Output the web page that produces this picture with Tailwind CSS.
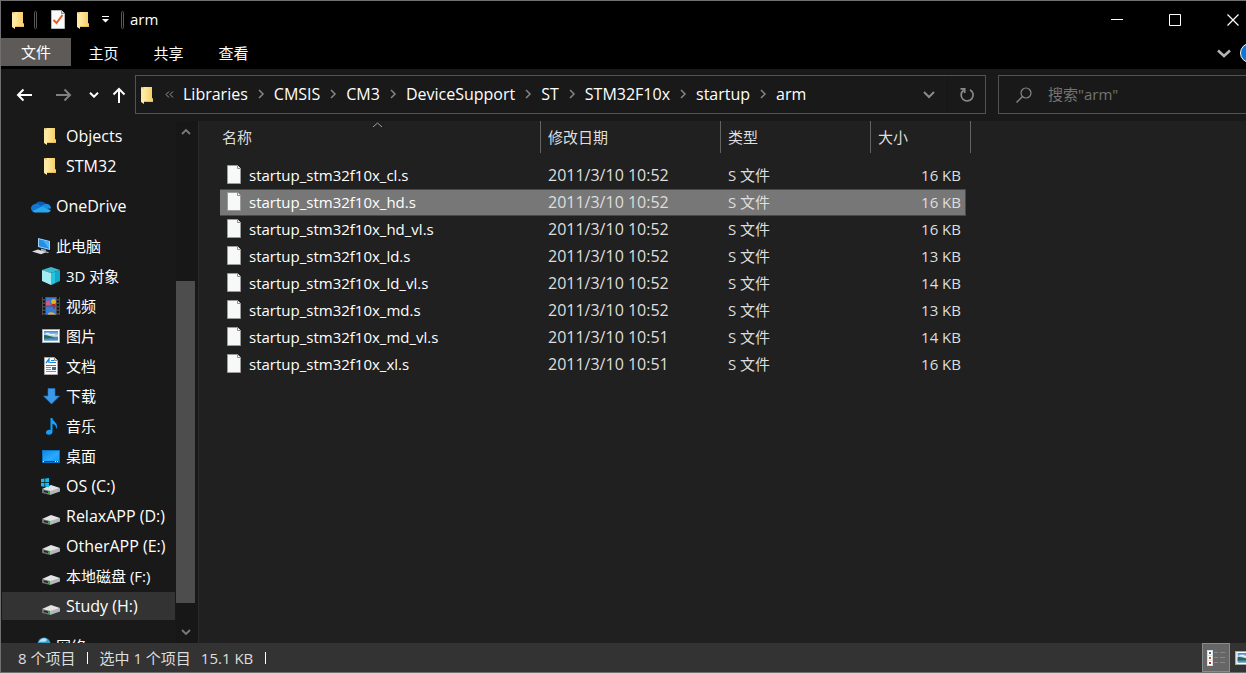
<!DOCTYPE html>
<html lang="zh-CN">
<head>
<meta charset="utf-8">
<title>arm</title>
<script src="https://cdn.jsdelivr.net/npm/@tailwindcss/browser@4"></script>
</head>
<body class="h-screen overflow-hidden bg-[#202020] font-['Open_Sans','Noto_Sans_CJK_SC',sans-serif] text-[15px] leading-5 text-white">
<svg class="absolute h-0 w-0" aria-hidden="true">
  <defs>
    <linearGradient id="gf" x1="0" x2="1"><stop offset="0" stop-color="#ffeaa0"/><stop offset="1" stop-color="#f5cd62"/></linearGradient>
    <linearGradient id="gs" x1="0" y1="0" x2="1" y2="1"><stop offset="0" stop-color="#1388e0"/><stop offset=".6" stop-color="#2aa9ff"/><stop offset="1" stop-color="#0e9bfb"/></linearGradient>
    <linearGradient id="gp" x1="0" y1="0" x2="0" y2="1"><stop offset="0" stop-color="#3d86d8"/><stop offset=".5" stop-color="#cfe6f5"/><stop offset=".65" stop-color="#4f8fa8"/><stop offset=".8" stop-color="#3a7fb0"/><stop offset="1" stop-color="#9dc6e0"/></linearGradient>
    <symbol id="folder" viewBox="0 0 14 18"><path d="M3 1h9v11l1 1v3H3z" fill="#e9bf5c"/><path d="M4 1h8v11l1 1v2H4z" fill="url(#gf)"/><path d="M1 1l3 2v15l-3-2z" fill="#ffe9a6"/><path d="M1 1h3v2z" fill="#f3cf74"/></symbol>
    <symbol id="file" viewBox="0 0 16 19"><path d="M1.5.5h10l3 3v15h-13z" fill="#f7f8f8" stroke="#9b9b9b"/><path d="M11.500.5v3h3" fill="#fff" stroke="#8d8d8d"/></symbol>
    <symbol id="drive" viewBox="0 0 20 14"><path d="M1 7l9-4 9 3-9 5z" fill="#e4e4e6"/><path d="M1 7l8 2v4l-8-2z" fill="#6d7276"/><path d="M9 9l10-3v3.500L9 13z" fill="#b4b7ba"/><path d="M3 8.600l4 1v1.500l-4-1z" fill="#222"/><path d="M7 10h1.500v1.500H7z" fill="#2fc02f"/></symbol>
    <symbol id="right" viewBox="0 0 8 10"><path d="M2 1l4 4-4 4" fill="none" stroke="#858585" stroke-width="1.500"/></symbol>
    <symbol id="down" viewBox="0 0 12 8"><path d="M1 1l5 5 5-5" fill="none" stroke="currentColor" stroke-width="2"/></symbol>
    <symbol id="picture" viewBox="0 0 18 14"><path d="M0 0h18v14H0z" fill="#a8a8a8"/><path d="M1 1h16v12H1z" fill="#fff"/><path d="M2 2h14v10H2z" fill="url(#gp)"/><path d="M2 6c4 0 7 1.500 11 2.500L2 9.500z" fill="#2d6658"/><path d="M3 5c2-2 4-1 5 0h5v1H8z" fill="#e6f3fb"/></symbol>
  </defs>
</svg>
<div class="flex h-full flex-col border-y border-l border-[#6f6f6f]">

  <header class="shrink-0 bg-black">
    <div class="flex h-[37px] items-center justify-between">
      <div class="flex items-center">
        <svg class="ml-[10px] h-[18px] w-[14px]"><use href="#folder"/></svg>
        <span class="ml-[9px] h-[18px] w-[3px] rounded-sm border border-[#5a5a5a]"></span>
        <button aria-label="属性" class="ml-[13px]"><svg class="block h-[19px] w-4" viewBox="0 0 16 19"><path d="M1.500.5h10l3 3v15h-13z" fill="#fafafa" stroke="#b8b8b8"/><path d="M11.500.5v3h3" fill="#ddd" stroke="#8d8d8d"/><path d="M3.500 10l3 3 6-8" fill="none" stroke="#ea5b1c" stroke-width="2"/></svg></button>
        <button aria-label="新建文件夹" class="ml-[10px]"><svg class="block h-[18px] w-[14px]"><use href="#folder"/></svg></button>
        <button aria-label="自定义快速访问工具栏" class="ml-3"><svg class="block h-[7px] w-[7px]" viewBox="0 0 7 7"><path d="M0 0h7v1H0zM0 3h7L3.500 6.500z" fill="#fff"/></svg></button>
        <span class="ml-3 h-[18px] w-[3px] rounded-sm border border-[#5a5a5a]"></span>
        <h1 class="ml-[6px] pb-[2px]">arm</h1>
      </div>
      <div class="-mr-[16px] flex">
        <button aria-label="最小化" class="grid h-[37px] w-[58px] place-items-center"><svg class="h-3 w-3" viewBox="0 0 12 12"><path d="M0 5h12v1H0z" fill="#fff"/></svg></button>
        <button aria-label="最大化" class="grid h-[37px] w-[58px] place-items-center"><svg class="h-3 w-3" viewBox="0 0 12 12"><path d="M.5.5h11v11H.5z" fill="none" stroke="#fff"/></svg></button>
        <button aria-label="关闭" class="grid h-[37px] w-[58px] place-items-center"><svg class="h-3 w-3" viewBox="0 0 12 12"><path d="M.5.5l11 11m0-11l-11 11" stroke="#fff" stroke-width="1.200"/></svg></button>
      </div>
    </div>
    <div class="flex h-[31px] items-start justify-between">
      <nav class="flex" aria-label="功能区">
        <button class="h-7 w-[70px] bg-[#5d5a58]">文件</button>
        <button class="h-[30px] w-[65px]">主页</button>
        <button class="h-[30px] w-[65px]">共享</button>
        <button class="h-[30px] w-[65px]">查看</button>
      </nav>
      <div class="-mr-[14px] flex h-[30px] items-center gap-[9px]">
        <button aria-label="展开功能区" class="text-[#b5b5b5]"><svg class="block h-[9px] w-[14px]" viewBox="0 0 14 9"><path d="M1 1.500l6 5.500 6-5.500" fill="none" stroke="currentColor" stroke-width="2.500"/></svg></button>
        <button aria-label="帮助" class="h-5 w-5 rounded-full border border-white bg-[#0a78d6]"></button>
      </div>
    </div>
  </header>

  <div class="flex h-[52px] shrink-0 items-start bg-[#191919] pt-[6px]">
    <div class="flex h-[39px] w-[134px] items-center">
      <button aria-label="后退" class="ml-[15px]"><svg class="block h-[14px] w-[17px]" viewBox="0 0 17 14"><path d="M16 7H2m5.500-5.500L2 7l5.500 5.500" fill="none" stroke="#fff" stroke-width="2"/></svg></button>
      <button aria-label="前进" class="ml-[22px]"><svg class="block h-[14px] w-[17px]" viewBox="0 0 17 14"><path d="M1 7h14M9.500 1.500L15 7l-5.500 5.500" fill="none" stroke="#808080" stroke-width="2"/></svg></button>
      <button aria-label="最近浏览的位置" class="ml-[17px]"><svg class="block h-[6px] w-[10px]" viewBox="0 0 10 6"><path d="M1 .7l4 4 4-4" fill="none" stroke="#fff" stroke-width="2"/></svg></button>
      <button aria-label="上移" class="ml-[13px]"><svg class="block h-4 w-[14px]" viewBox="0 0 14 16"><path d="M7 16V2M1.500 7.500L7 2l5.500 5.500" fill="none" stroke="#fff" stroke-width="2"/></svg></button>
    </div>
    <div class="flex h-[39px] flex-1 items-center border border-[#535353]">
      <svg class="ml-1 h-[18px] w-[14px]"><use href="#folder"/></svg>
      <button aria-label="更多位置" class="ml-[11px] mr-[9px]"><svg class="block h-[7px] w-[9px]" viewBox="0 0 9 7"><path d="M4 .5l-3 3 3 3m4-6l-3 3 3 3" fill="none" stroke="#999"/></svg></button>
      <nav aria-label="地址" class="flex items-center gap-[9px] pb-[2px] text-base leading-5">
        <a href="#">Libraries</a><svg class="h-[10px] w-2"><use href="#right"/></svg>
        <a href="#">CMSIS</a><svg class="h-[10px] w-2"><use href="#right"/></svg>
        <a href="#">CM3</a><svg class="h-[10px] w-2"><use href="#right"/></svg>
        <a href="#">DeviceSupport</a><svg class="h-[10px] w-2"><use href="#right"/></svg>
        <a href="#">ST</a><svg class="h-[10px] w-2"><use href="#right"/></svg>
        <a href="#">STM32F10x</a><svg class="h-[10px] w-2"><use href="#right"/></svg>
        <a href="#">startup</a><svg class="h-[10px] w-2"><use href="#right"/></svg>
        <a href="#">arm</a>
      </nav>
      <button aria-label="以前的位置" class="ml-auto grid h-full w-9 place-items-center text-[#8a8a8a]"><svg class="h-2 w-3"><use href="#down"/></svg></button>
      <button aria-label="刷新" class="grid h-full w-[38px] place-items-center border-l border-[#151515]"><svg class="h-4 w-4" viewBox="0 0 16 16"><path d="M11 2.700A6 6 0 1 1 4.500 3.200M1.500 1.800h4.200v4.200" fill="none" stroke="#8a8a8a" stroke-width="1.700"/></svg></button>
    </div>
    <label class="ml-3 flex h-[39px] w-[248px] items-center border-y border-l border-[#535353]">
      <svg class="ml-[17px] h-4 w-4 shrink-0" viewBox="0 0 16 16"><circle cx="10" cy="6" r="5" fill="none" stroke="#868686" stroke-width="1.200"/><path d="M6.500 9.500L.5 15.500" stroke="#868686" stroke-width="1.400"/></svg>
      <input type="text" aria-label="搜索" placeholder='搜索"arm"' class="ml-4 min-w-0 flex-1 bg-transparent pb-[2px] outline-none placeholder:text-[#737373]">
    </label>
  </div>

  <div class="flex min-h-0 flex-1">
    <aside class="flex w-[198px] shrink-0 border-r border-[#2b2b2b] bg-[#191919]">
      <nav aria-label="导航窗格" class="flex-1 overflow-hidden">
        <ul class="[&_a]:flex [&_a]:h-[30px] [&_a]:items-center [&_a]:gap-[5px] [&_a]:whitespace-nowrap [&_svg]:h-5 [&_svg]:w-5 [&_svg]:shrink-0">
          <li class="text-base leading-5"><a href="#" class="pl-10"><svg viewBox="-2 -1 20 20"><use href="#folder" width="14" height="18"/></svg>Objects</a></li>
          <li class="text-base leading-5"><a href="#" class="pl-10"><svg viewBox="-2 -1 20 20"><use href="#folder" width="14" height="18"/></svg>STM32</a></li>
          <li class="mt-[10px] text-base leading-5"><a href="#" class="pl-[30px]"><svg viewBox="0 0 20 20"><path d="M4 9a6 5 0 0 1 11-1l-4 4z" fill="#0a5cb5"/><path d="M4 8c4-1 6 2 8 4l-7 4.500H4.500A4.200 4.200 0 0 1 4 8z" fill="#1177d2"/><path d="M14 8a4.500 4.500 0 0 1 6 4.500l-6 .5-4-3z" fill="#1a8ce4"/><path d="M1.500 15L11 10.500l8.800 3.800A3 3 0 0 1 17 16.500H4.500a4 4 0 0 1-3-1.500z" fill="#28a8ea"/></svg>OneDrive</a></li>
          <li class="mt-[10px]"><a href="#" class="pl-[30px]"><svg viewBox="0 0 20 20"><path d="M7 2l12 3v9L7 11z" fill="#9bd4f5"/><path d="M8 3.200l10 2.500v7L8 10.200z" fill="#258fe8"/><path d="M12 4.200l6 1.500v7z" fill="#4cb3fb"/><path d="M10 12.500l5 1.200v1.500l3 1-1 1-7-2z" fill="#9ba4ab"/><path d="M1 15.500l6-2 8 2.800-5 2z" fill="#d9dde1"/></svg>此电脑</a></li>
          <li><a href="#" class="pl-10"><svg viewBox="0 0 20 20"><path d="M10 1l9 3-9 3-9-3z" fill="#3fb9cf"/><path d="M1 4l9 3v12l-9-4z" fill="#a3edf2"/><path d="M10 7l9-3v11l-9 4z" fill="#12a6d0"/><path d="M10 7l4-1v11l-4 2z" fill="#24c4dc"/></svg>3D 对象</a></li>
          <li><a href="#" class="pl-10"><svg viewBox="0 0 20 20"><path d="M1 1h18v18H1z" fill="#4b4b4b"/><path d="M5 1.500h10v8H5zM5 10.500h10v8H5z" fill="#3a79d8"/><path d="M5 6l3-2 2 5.500H5z" fill="#d65a77"/><circle cx="12.500" cy="5.500" r="2.500" fill="#d8b722"/><path d="M11 8h3v1.500h-3zM12 10.500h2v2h-2z" fill="#b82222"/><path d="M7 18.500c0-3 5-3 8 0z" fill="#e7b72b"/><path d="M3 1v18M17 1v18" stroke="#111" stroke-width="2" stroke-dasharray="2 1.500"/></svg>视频</a></li>
          <li><a href="#" class="pl-10"><svg viewBox="-1 -3 20 20"><use href="#picture" width="18" height="14"/></svg>图片</a></li>
          <li><a href="#" class="pl-10"><svg viewBox="0 0 20 20"><path d="M3.500 1.500h10l3 3v14h-13z" fill="#fff" stroke="#aaa"/><path d="M13.500 1.500v3h3" fill="#ddd" stroke="#888"/><path d="M5 7l3-4v4" fill="none" stroke="#1687d8" stroke-width="1.300"/><path d="M10 4.500h3M9 6.500h6M5 9.500h10" stroke="#1687d8"/><path d="M5 11.500h5M5 13.500h5M5 15.500h10" stroke="#8b8b8b"/><path d="M11 11h4v3h-4z" fill="#356d8e"/></svg>文档</a></li>
          <li><a href="#" class="pl-10"><svg viewBox="0 0 20 20"><path d="M7 2.500h7v7.500h4.500L10.500 18 2.500 10H7z" fill="#3b99ea" stroke="#2673bd" stroke-width=".6"/></svg>下载</a></li>
          <li><a href="#" class="pl-10"><svg viewBox="0 0 20 20"><path d="M9.500 2h2c0 3.500 4.500 4 4.500 8 0 1.500-.5 2.500-1 3 .3-3-1-4.500-3.500-5v8c0 1.500-1.500 2.800-3.500 2.800S5 17.800 5 16.500s1.500-2.700 3.300-2.700c.5 0 1 .1 1.200.2z" fill="#12a0fb"/></svg>音乐</a></li>
          <li><a href="#" class="pl-10"><svg viewBox="0 0 20 20"><path d="M1 4h18v13H1z" fill="#0b76c9"/><path d="M2 5h16v10H2z" fill="url(#gs)"/><path d="M2 15h16v1H2z" fill="#07456f"/><path d="M2 15h1v1H2zM14 15h1v1h-1zM16 15h1v1h-1z" fill="#fff"/></svg>桌面</a></li>
          <li class="text-base leading-5"><a href="#" class="pl-10"><svg viewBox="0 0 20 20"><use href="#drive" y="6" width="20" height="14"/><path d="M0 3l3.500-.5v3.700H0zM4.200 2.400L8 2v4.200H4.200zM0 7h3.500v3.700L0 10.200zM4.200 7H8v4.200l-3.800-.4z" fill="#12baf2"/></svg>OS (C:)</a></li>
          <li class="text-base leading-5"><a href="#" class="pl-10"><svg viewBox="0 0 20 20"><use href="#drive" y="6" width="20" height="14"/></svg>RelaxAPP (D:)</a></li>
          <li class="text-base leading-5"><a href="#" class="pl-10"><svg viewBox="0 0 20 20"><use href="#drive" y="6" width="20" height="14"/></svg>OtherAPP (E:)</a></li>
          <li><a href="#" class="pl-10"><svg viewBox="0 0 20 20"><use href="#drive" y="6" width="20" height="14"/></svg>本地磁盘 (F:)</a></li>
          <li class="text-base leading-5"><a href="#" aria-current="true" class="ml-px mr-px border-y border-[#191919] bg-[#333] pl-[39px]"><svg viewBox="0 0 20 20"><use href="#drive" y="6" width="20" height="14"/></svg>Study (H:)</a></li>
          <li class="mt-[10px]"><a href="#" class="pl-[30px]"><svg viewBox="0 0 20 20"><path d="M2 7h4v8H2z" fill="#7e8a92"/><circle cx="13" cy="8" r="6.500" fill="#3b9dcb"/><path d="M8 6c1-4 7-5 8-2-2 3-5 1-8 2z" fill="#b5e3f4"/></svg>网络</a></li>
        </ul>
      </nav>
      <div class="flex w-[22px] flex-col items-start bg-[#171717] text-[#7a7a7a]" aria-hidden="true">
        <span class="grid h-5 w-[19px] place-items-center"><svg class="h-[7px] w-[10px]" viewBox="0 0 10 7"><path d="M1 6l4-4 4 4" fill="none" stroke="currentColor" stroke-width="1.800"/></svg></span>
        <span class="basis-[140px]"></span>
        <span class="w-[19px] grow bg-[#4d4d4d]"></span>
        <span class="basis-[19px]"></span>
        <span class="grid h-[21px] w-[19px] place-items-center"><svg class="h-[7px] w-[10px]" viewBox="0 0 10 7"><path d="M1 1l4 4 4-4" fill="none" stroke="currentColor" stroke-width="1.800"/></svg></span>
      </div>
    </aside>

    <main class="min-w-0 flex-1 overflow-hidden pl-[21px]">
      <table class="w-[751px] table-fixed border-separate border-spacing-0 text-left text-[#dedede] [&_tbody_td]:h-[27px] [&_tbody_td]:p-0 [&_tbody_td]:pb-[2px] [&_tbody_td]:pl-[7px] [&_tbody_td:first-child]:pl-[6px] [&_tbody_td:first-child]:text-white [&_tbody_td:nth-child(2)]:text-base [&_tbody_td:nth-child(2)]:leading-5">
        <colgroup><col class="w-[321px]"><col class="w-[180px]"><col class="w-[150px]"><col class="w-[95px]"><col class="w-[5px]"></colgroup>
        <thead>
          <tr class="[&>th]:h-8 [&>th]:border-r [&>th]:border-[#636363] [&>th]:p-0 [&>th]:font-normal">
            <th class="relative"><button class="pl-[2px]">名称</button><svg class="absolute left-[152px] top-px h-[6px] w-[11px]" viewBox="0 0 11 6"><path d="M1 5l4.500-4L10 5" fill="none" stroke="#a0a0a0"/></svg></th>
            <th><button class="pl-[7px]">修改日期</button></th>
            <th><button class="pl-[7px]">类型</button></th>
            <th colspan="2"><button class="pl-[7px]">大小</button></th>
          </tr>
        </thead>
        <tbody class="before:block before:h-[9px] [&_td:nth-child(4)]:pr-[5px] [&_td:nth-child(4)]:text-right">
          <tr><td><span class="flex items-center gap-[7px]"><svg class="h-[19px] w-4"><use href="#file"/></svg>startup_stm32f10x_cl.s</span></td><td>2011/3/10 10:52</td><td>S 文件</td><td>16 KB</td></tr>
          <tr aria-selected="true" class="[&>td]:border-y [&>td]:border-[#4a4a4a] [&>td]:bg-[#777] [&>td:last-child]:shadow-[inset_-1px_0_#4a4a4a]"><td><span class="flex items-center gap-[7px]"><svg class="h-[19px] w-4"><use href="#file"/></svg>startup_stm32f10x_hd.s</span></td><td>2011/3/10 10:52</td><td>S 文件</td><td>16 KB</td></tr>
          <tr><td><span class="flex items-center gap-[7px]"><svg class="h-[19px] w-4"><use href="#file"/></svg>startup_stm32f10x_hd_vl.s</span></td><td>2011/3/10 10:52</td><td>S 文件</td><td>16 KB</td></tr>
          <tr><td><span class="flex items-center gap-[7px]"><svg class="h-[19px] w-4"><use href="#file"/></svg>startup_stm32f10x_ld.s</span></td><td>2011/3/10 10:52</td><td>S 文件</td><td>13 KB</td></tr>
          <tr><td><span class="flex items-center gap-[7px]"><svg class="h-[19px] w-4"><use href="#file"/></svg>startup_stm32f10x_ld_vl.s</span></td><td>2011/3/10 10:52</td><td>S 文件</td><td>14 KB</td></tr>
          <tr><td><span class="flex items-center gap-[7px]"><svg class="h-[19px] w-4"><use href="#file"/></svg>startup_stm32f10x_md.s</span></td><td>2011/3/10 10:52</td><td>S 文件</td><td>13 KB</td></tr>
          <tr><td><span class="flex items-center gap-[7px]"><svg class="h-[19px] w-4"><use href="#file"/></svg>startup_stm32f10x_md_vl.s</span></td><td>2011/3/10 10:51</td><td>S 文件</td><td>14 KB</td></tr>
          <tr><td><span class="flex items-center gap-[7px]"><svg class="h-[19px] w-4"><use href="#file"/></svg>startup_stm32f10x_xl.s</span></td><td>2011/3/10 10:51</td><td>S 文件</td><td>16 KB</td></tr>
        </tbody>
      </table>
    </main>
  </div>

  <footer class="flex h-[29px] shrink-0 items-center justify-between bg-[#333] text-[#dedede]">
    <div class="flex items-center pl-[17px]">
      <span>8 个项目</span>
      <span class="ml-3 h-3 w-px bg-white"></span>
      <span class="ml-[11px]">选中 1 个项目</span>
      <span class="ml-[10px]">15.1 KB</span>
      <span class="ml-3 h-3 w-px bg-white"></span>
    </div>
    <div class="-mr-[12px] flex items-center">
      <button aria-label="详细信息" class="grid h-[29px] w-7 place-items-center border border-[#8a8a8a] bg-[#666]"><svg class="h-4 w-[18px]" viewBox="0 0 18 16"><path d="M0 0h6v16H0z" fill="#ddd"/><path d="M1 1h4v4H1zM1 6h4v4H1zM1 11h4v4H1z" fill="#fff"/><path d="M2 2h2v2H2z" fill="#2474ad"/><path d="M2 7h2v2H2z" fill="#a0662a"/><path d="M2 12h2v2H2z" fill="#c22"/><path d="M7 2.500h4m2 0h5M7 7.500h4m2 0h5M7 12.500h4m2 0h5" stroke="#878787"/></svg></button>
      <button aria-label="大缩略图" class="ml-[5px]"><svg class="block h-[14px] w-[23px]" viewBox="0 0 18 14" preserveAspectRatio="none"><use href="#picture" width="18" height="14"/></svg></button>
    </div>
  </footer>
</div>
</body>
</html>
